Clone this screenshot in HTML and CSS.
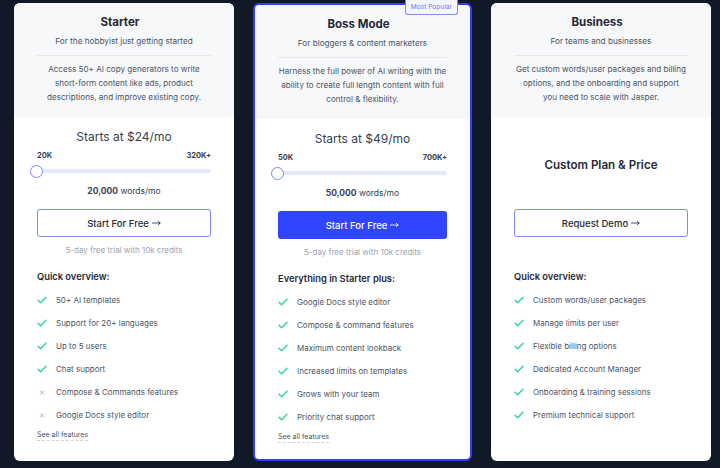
FILE: index.html
```html
<!DOCTYPE html>
<html lang="en">
<head>
<meta charset="utf-8">
<title>Pricing</title>
<link rel="stylesheet" href="styles.css">
</head>
<body>
<div class="plans">
  <div class="card">
    <div class="head">
      <h2 class="title">Starter</h2>
      <p class="sub">For the hobbyist just getting started</p>
      <hr class="rule">
      <p class="desc">Access 50+ AI copy generators to write<br>short-form content like ads, product<br>descriptions, and improve existing copy.</p>
    </div>
    <div class="body">
      <div class="price">Starts at $24/mo</div>
      <div class="range-labels"><span>20K</span><span>320K+</span></div>
      <div class="track"><span class="thumb"></span></div>
      <div class="words"><b>20,000</b> words/mo</div>
      <a class="btn btn-outline">Start For Free <svg class="arrow" viewBox="0 0 10 6"><path d="M0 3 H9 M7 1.2 L9 3 L7 4.8"/></svg></a>
      <div class="trial">5-day free trial with 10k credits</div>
      <div class="list-title">Quick overview:</div>
      <ul class="features">
        <li><svg class="ic" viewBox="0 0 10 8"><polyline points="1,4.2 3.6,6.8 9,1.2"/></svg>50+ AI templates</li>
        <li><svg class="ic" viewBox="0 0 10 8"><polyline points="1,4.2 3.6,6.8 9,1.2"/></svg>Support for 20+ languages</li>
        <li><svg class="ic" viewBox="0 0 10 8"><polyline points="1,4.2 3.6,6.8 9,1.2"/></svg>Up to 5 users</li>
        <li><svg class="ic" viewBox="0 0 10 8"><polyline points="1,4.2 3.6,6.8 9,1.2"/></svg>Chat support</li>
        <li><svg class="ic ic-x" viewBox="0 0 10 8"><path d="M3.5 3 L6.5 6 M6.5 3 L3.5 6"/></svg>Compose &amp; Commands features</li>
        <li><svg class="ic ic-x" viewBox="0 0 10 8"><path d="M3.5 3 L6.5 6 M6.5 3 L3.5 6"/></svg>Google Docs style editor</li>
      </ul>
      <a class="see-all">See all features</a>
    </div>
  </div>

  <div class="card card-popular">
    <span class="badge">Most Popular</span>
    <div class="head">
      <h2 class="title">Boss Mode</h2>
      <p class="sub">For bloggers &amp; content marketers</p>
      <hr class="rule">
      <p class="desc">Harness the full power of AI writing with the<br>ability to create full length content with full<br>control &amp; flexibility.</p>
    </div>
    <div class="body">
      <div class="price">Starts at $49/mo</div>
      <div class="range-labels"><span>50K</span><span>700K+</span></div>
      <div class="track"><span class="thumb"></span></div>
      <div class="words"><b>50,000</b> words/mo</div>
      <a class="btn btn-solid">Start For Free <svg class="arrow" viewBox="0 0 10 6"><path d="M0 3 H9 M7 1.2 L9 3 L7 4.8"/></svg></a>
      <div class="trial">5-day free trial with 10k credits</div>
      <div class="list-title">Everything in Starter plus:</div>
      <ul class="features">
        <li><svg class="ic" viewBox="0 0 10 8"><polyline points="1,4.2 3.6,6.8 9,1.2"/></svg>Google Docs style editor</li>
        <li><svg class="ic" viewBox="0 0 10 8"><polyline points="1,4.2 3.6,6.8 9,1.2"/></svg>Compose &amp; command features</li>
        <li><svg class="ic" viewBox="0 0 10 8"><polyline points="1,4.2 3.6,6.8 9,1.2"/></svg>Maximum content lookback</li>
        <li><svg class="ic" viewBox="0 0 10 8"><polyline points="1,4.2 3.6,6.8 9,1.2"/></svg>Increased limits on templates</li>
        <li><svg class="ic" viewBox="0 0 10 8"><polyline points="1,4.2 3.6,6.8 9,1.2"/></svg>Grows with your team</li>
        <li><svg class="ic" viewBox="0 0 10 8"><polyline points="1,4.2 3.6,6.8 9,1.2"/></svg>Priority chat support</li>
      </ul>
      <a class="see-all">See all features</a>
    </div>
  </div>

  <div class="card">
    <div class="head">
      <h2 class="title">Business</h2>
      <p class="sub">For teams and businesses</p>
      <hr class="rule">
      <p class="desc">Get custom words/user packages and billing<br>options, and the onboarding and support<br>you need to scale with Jasper.</p>
    </div>
    <div class="body">
      <div class="custom">Custom Plan &amp; Price</div>
      <a class="btn btn-outline">Request Demo <svg class="arrow" viewBox="0 0 10 6"><path d="M0 3 H9 M7 1.2 L9 3 L7 4.8"/></svg></a>
      <div class="trial trial-empty">&nbsp;</div>
      <div class="list-title">Quick overview:</div>
      <ul class="features">
        <li><svg class="ic" viewBox="0 0 10 8"><polyline points="1,4.2 3.6,6.8 9,1.2"/></svg>Custom words/user packages</li>
        <li><svg class="ic" viewBox="0 0 10 8"><polyline points="1,4.2 3.6,6.8 9,1.2"/></svg>Manage limits per user</li>
        <li><svg class="ic" viewBox="0 0 10 8"><polyline points="1,4.2 3.6,6.8 9,1.2"/></svg>Flexible billing options</li>
        <li><svg class="ic" viewBox="0 0 10 8"><polyline points="1,4.2 3.6,6.8 9,1.2"/></svg>Dedicated Account Manager</li>
        <li><svg class="ic" viewBox="0 0 10 8"><polyline points="1,4.2 3.6,6.8 9,1.2"/></svg>Onboarding &amp; training sessions</li>
        <li><svg class="ic" viewBox="0 0 10 8"><polyline points="1,4.2 3.6,6.8 9,1.2"/></svg>Premium technical support</li>
      </ul>
    </div>
  </div>
</div>
</body>
</html>
```

FILE: styles.css
```css
* { box-sizing: border-box; }

html, body {
  margin: 0;
  padding: 0;
  background: #111827;
  height: 468px;
  overflow: hidden;
}

body {
  font-family: Inter, "Liberation Sans", sans-serif;
  color: #374151;
}

.plans {
  display: flex;
  gap: 19px;
  padding: 3px 8px 0 14px;
}

.card {
  position: relative;
  width: 220px;
  height: 458px;
  background: #ffffff;
  border-radius: 6px;
  display: flex;
  flex-direction: column;
}

.card-popular {
  border: 2px solid #2f3ffc;
  width: 219px;
}

.badge {
  position: absolute;
  top: -5px;
  right: 12px;
  height: 15px;
  padding: 0 5px;
  display: flex;
  align-items: center;
  font-size: 6.6px;
  color: #6a79f5;
  background: #f4f6ff;
  border: 1px solid #7f8cf7;
  border-top: none;
  border-radius: 0 0 3px 3px;
}

.head {
  background: #f7f8fa;
  border-radius: 6px 6px 0 0;
  padding: 11px 23px 13px;
  text-align: center;
}

.title {
  margin: 0;
  padding-right: 8px;
  font-size: 11.5px;
  line-height: 16px;
  font-weight: 700;
  color: #1f2937;
}

.sub {
  margin: 5px 0 0;
  font-size: 8.2px;
  line-height: 12px;
  color: #4b5563;
}

.rule {
  margin: 8px 0 0;
  border: 0;
  border-top: 1px solid #e5e7eb;
  height: 0;
}

.desc {
  margin: 6px 0 0;
  font-size: 8.1px;
  line-height: 14px;
  color: #4b5563;
  white-space: nowrap;
}

.body {
  flex: 1;
  padding: 12px 23px 0;
  display: flex;
  flex-direction: column;
}

.price {
  text-align: center;
  font-size: 12px;
  line-height: 16px;
  color: #374151;
}

.range-labels {
  margin-top: 6px;
  display: flex;
  justify-content: space-between;
  font-size: 7.5px;
  line-height: 10px;
  font-weight: 700;
  color: #374151;
}

.track {
  position: relative;
  margin-top: 8px;
  height: 4px;
  border-radius: 2px;
  background: #e4e9fb;
}

.thumb {
  position: absolute;
  left: -7px;
  top: -4.5px;
  width: 13px;
  height: 13px;
  border-radius: 50%;
  background: #ffffff;
  border: 1.5px solid #7b8af5;
}

.words {
  margin-top: 12px;
  text-align: center;
  font-size: 8.5px;
  line-height: 12px;
  color: #374151;
}

.words b { font-weight: 700; }

.btn {
  margin-top: 12px;
  height: 28px;
  display: flex;
  align-items: center;
  justify-content: center;
  gap: 3px;
  border-radius: 3px;
  font-size: 9.5px;
  font-weight: 500;
}

.arrow {
  width: 9px;
  height: 6px;
  fill: none;
  stroke: currentColor;
  stroke-width: 0.9;
  stroke-linecap: round;
  stroke-linejoin: round;
}

.btn-outline {
  border: 1px solid #7b8af5;
  color: #1f2937;
  background: #ffffff;
}

.btn-solid {
  background: #2f45ff;
  color: #ffffff;
}

.trial {
  margin-top: 8px;
  text-align: center;
  font-size: 8px;
  line-height: 10px;
  color: #9ca3af;
}

.trial-empty { visibility: hidden; }

.custom {
  height: 68px;
  display: flex;
  align-items: center;
  justify-content: center;
  padding-top: 4px;
  font-size: 11.6px;
  font-weight: 600;
  color: #1f2937;
}

.list-title {
  margin-top: 16px;
  font-size: 9.3px;
  line-height: 12px;
  font-weight: 600;
  color: #1f2937;
}

.features {
  list-style: none;
  margin: 5px 0 0;
  padding: 0;
}

.features li {
  height: 23px;
  display: flex;
  align-items: center;
  font-size: 8px;
  color: #4b5563;
}

.ic {
  width: 10px;
  height: 8px;
  margin-right: 9px;
  flex: none;
  fill: none;
  stroke: #34d399;
  stroke-width: 1.4;
  stroke-linecap: round;
  stroke-linejoin: round;
}

.ic-x {
  stroke: #a5a8c8;
  stroke-width: 1;
}

.see-all {
  margin-top: 4px;
  align-self: flex-start;
  font-size: 7px;
  line-height: 10px;
  color: #4b5563;
  border-bottom: 1px dashed #d1d5db;
}
```
